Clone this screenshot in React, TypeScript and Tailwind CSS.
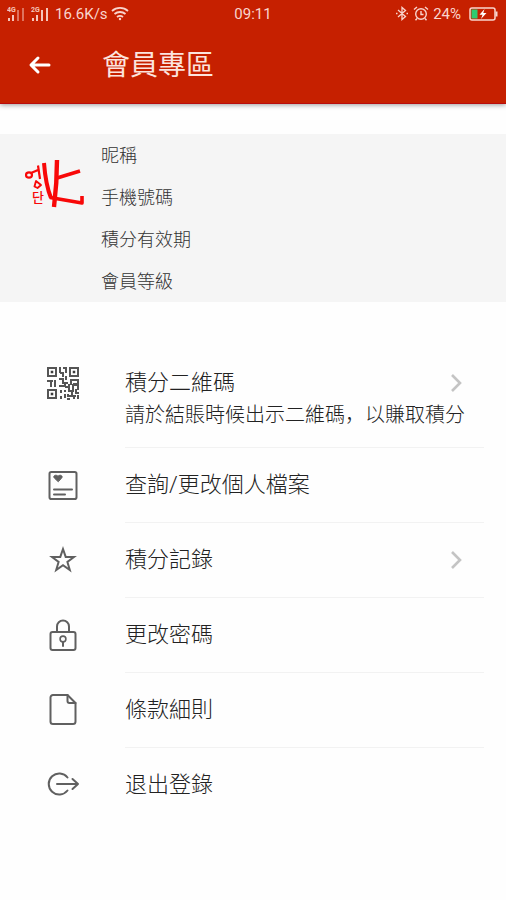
import type { ReactNode } from 'react';
import { clsx } from 'clsx';

interface MenuItem {
  id: string;
  label: string;
  description?: string;
  icon: ReactNode;
  hasArrow?: boolean;
}

const QR_FINDERS = [
  [0, 0],
  [22, 0],
  [0, 22],
];

const QR_BITS = [
  'M13 0v6M13 6h3v4M19 0v6M16 1h3M19 9v4',
  'M0 14h6M4 14v6M8 13v7M12 12h4v4h5M23 13h9M31 13v4h-5M24 14v4',
  'M12 19h6v-3M18 20h4v4h4v-6h5v5M22 21v-4M29 22v4h3M25 25v4h4',
  'M14 23v3M17 24h2M14 29v3M18 27v4M21 27v2h3M20 32h3M27 28v4M31 28v4',
];

function QrIcon() {
  return (
    <svg
      viewBox="-1 -1 34 34"
      fill="none"
      strokeWidth="2"
      className="h-[34px] w-[34px] stroke-[#555]"
    >
      {QR_FINDERS.map(([x, y]) => (
        <g key={`${x}-${y}`}>
          <rect x={x + 1} y={y + 1} width="8" height="8" />
          <rect
            x={x + 4}
            y={y + 4}
            width="2"
            height="2"
            fill="#222"
            strokeWidth="0.6"
          />
        </g>
      ))}
      {QR_BITS.map((d) => (
        <path key={d} d={d} />
      ))}
    </svg>
  );
}

function LineIcon({ children }: { children: ReactNode }) {
  return (
    <svg
      viewBox="0 0 34 34"
      fill="none"
      strokeWidth="2"
      strokeLinecap="round"
      strokeLinejoin="round"
      className="h-[34px] w-[34px] stroke-[#606060]"
    >
      {children}
    </svg>
  );
}

const menuItems: MenuItem[] = [
  {
    id: 'qr',
    label: '積分二維碼',
    description: '請於結賬時候出示二維碼，以賺取積分',
    icon: <QrIcon />,
    hasArrow: true,
  },
  {
    id: 'profile',
    label: '查詢/更改個人檔案',
    icon: (
      <LineIcon>
        <rect x="3.5" y="3" width="27" height="27" rx="1.8" />
        <path
          d="M12 12.5 8.3 9C6.5 7 9.700 5 12 7.200c2.300-2.200 5.500-.2 3.700 1.800Z"
          fill="#606060"
          strokeWidth="1"
        />
        <path d="M8 20.500h18M8 25.500h11" />
      </LineIcon>
    ),
  },
  {
    id: 'history',
    label: '積分記錄',
    icon: (
      <LineIcon>
        <path
          d="m17 5 2.700 7.900 8.300.1-6.600 5 2.400 8L17 21.200 10.200 26l2.400-8L6 13l8.300-.1Z"
          strokeLinejoin="miter"
        />
      </LineIcon>
    ),
    hasArrow: true,
  },
  {
    id: 'password',
    label: '更改密碼',
    icon: (
      <LineIcon>
        <rect x="4.500" y="13" width="25" height="18" rx="2" />
        <path d="M11 12.500V7.500a6 6 0 0 1 12 0v5" />
        <circle cx="17" cy="20" r="2.900" strokeWidth="1.600" />
        <path d="M17 23v4" />
      </LineIcon>
    ),
  },
  {
    id: 'terms',
    label: '條款細則',
    icon: (
      <LineIcon>
        <path d="M21.500 1H7a2.500 2.500 0 0 0-2.500 2.500v24A2.500 2.500 0 0 0 7 30h20a2.500 2.500 0 0 0 2.500-2.500V9Z" />
        <path d="M21.500 1v6a2 2 0 0 0 2 2h6" />
      </LineIcon>
    ),
  },
  {
    id: 'logout',
    label: '退出登錄',
    icon: (
      <LineIcon>
        <path d="M21.500 8.500A10.500 10.500 0 1 0 21.500 21.500" />
        <path d="M11 15h21M26.500 10l5.500 5-5.500 5" />
      </LineIcon>
    ),
  },
];

const profileFields = ['昵稱', '手機號碼', '積分有效期', '會員等級'];

function SignalBars({ label, dim }: { label: string; dim?: boolean }) {
  return (
    <svg viewBox="0 0 20 16" className="h-4 w-5 fill-[#f6c5bb]">
      <text x="0" y="6" fontSize="7" fontWeight="700">
        {label}
      </text>
      <rect x="1" y="12" width="2" height="3" />
      <rect x="5" y="9" width="2" height="6" />
      <rect x="10" y="4" width="2" height="11" opacity={dim ? 0.5 : 1} />
      <rect x="15" y="2" width="2" height="13" opacity={dim ? 0.5 : 1} />
    </svg>
  );
}

function StatusBar() {
  return (
    <div className="grid h-7 grid-cols-[1fr_auto_1fr] items-center px-[7px] text-[15px] text-[#f9d5cd]">
      <div className="flex items-center">
        <SignalBars label="4G" dim />
        <div className="w-1" />
        <SignalBars label="2G" />
        <span className="ml-1">16.6K/s</span>
        <svg
          viewBox="0 0 18 16"
          fill="none"
          stroke="currentColor"
          strokeWidth="1.800"
          className="ml-[3px] h-4 w-[18px]"
        >
          <path d="M1 5a12 12 0 0 1 16 0M3.500 8a8.500 8.500 0 0 1 11 0M6 11a5 5 0 0 1 6 0" />
          <circle cx="9" cy="13" r="1.200" fill="currentColor" stroke="none" />
        </svg>
      </div>
      <span>09:11</span>
      <div className="flex items-center justify-end gap-1">
        <svg
          viewBox="0 0 14 16"
          fill="none"
          stroke="currentColor"
          strokeWidth="1.300"
          className="h-4 w-[14px]"
        >
          <path d="m3 4 7.500 6.500L7 13.500v-12l3.500 3L3 11M1 7.500h1.500M11.500 7.500H13" />
        </svg>
        <svg
          viewBox="0 0 16 16"
          fill="none"
          stroke="currentColor"
          strokeWidth="1.400"
          className="h-4 w-4"
        >
          <circle cx="8" cy="8" r="5.300" />
          <path d="M8 5v3.500h2.500M1 3.500 4 1M15 3.500 12 1M4 12.500l-1.500 1.800M12 12.500l1.500 1.800" />
        </svg>
        <span className="mr-1">24%</span>
        <svg viewBox="0 0 30 14" className="h-[14px] w-[30px]">
          <rect
            x="1"
            y="1"
            width="25"
            height="12"
            rx="2"
            fill="none"
            stroke="currentColor"
            strokeWidth="1.500"
          />
          <rect x="2.500" y="2.500" width="6" height="9" fill="#2ecc71" />
          <path d="M27.500 4.500v5" stroke="currentColor" strokeWidth="2" />
          <path d="m15.500 2-5 5.800h3l-1.500 4.200 5.500-6h-3.200Z" fill="#fff" />
        </svg>
      </div>
    </div>
  );
}

function Logo() {
  return (
    <svg viewBox="0 0 60 50" className="h-[50px] w-[60px]" aria-hidden="true">
      <g fill="none" stroke="#f80808" strokeLinejoin="round">
        <path d="M19 3c1 13 2.500 24 7 35" strokeWidth="4" />
        <path d="M32 0c0 16-1 31-3 47" strokeWidth="4.400" />
        <path d="M32 18 55 11" strokeWidth="3.600" />
        <path d="M25 37.500 57 43v-7" strokeWidth="3.600" />
        {/* brush marks left of the K */}
        <ellipse cx="4" cy="15" rx="3" ry="2.600" strokeWidth="2.200" />
        <path d="m6 13 7-3M13 5.500 15 19" strokeWidth="2.200" />
        <path d="m11 21-1.500 5.500 3 1.500L16 25Z" strokeWidth="1.900" />
      </g>
      <text
        x="7"
        y="42"
        fontSize="13"
        fontWeight="500"
        fill="#f80808"
        fontFamily="Noto Sans CJK KR, sans-serif"
      >
        단
      </text>
    </svg>
  );
}

function MenuRow({ item, isLast }: { item: MenuItem; isLast: boolean }) {
  return (
    <li>
      <button
        type="button"
        className={clsx(
          'flex w-full pr-[22px] text-left',
          item.description ? 'h-[92px]' : 'h-[75px]'
        )}
      >
        <span
          className={clsx(
            'flex w-[125px] shrink-0 justify-center',
            item.description ? 'pt-[10px]' : 'self-center'
          )}
        >
          {item.icon}
        </span>
        <span
          className={clsx(
            'flex h-full min-w-0 flex-1 flex-col border-b',
            isLast ? 'border-transparent' : 'border-[#f2f2f2]',
            item.description ? 'pt-[11px]' : 'justify-center'
          )}
        >
          <span className="flex items-center justify-between pr-[22px]">
            <span className="text-[22px] leading-8">{item.label}</span>
            {item.hasArrow && (
              <svg
                viewBox="0 0 12 20"
                fill="none"
                strokeWidth="2.600"
                className="h-5 w-3 stroke-[#c4c4c4]"
              >
                <path d="m2 2 8 8-8 8" />
              </svg>
            )}
          </span>
          {item.description && (
            <span className="text-[20px] leading-8 whitespace-nowrap">
              {item.description}
            </span>
          )}
        </span>
      </button>
    </li>
  );
}

export default function App() {
  return (
    <div
      lang="zh-CN"
      className="min-h-screen bg-[#fefefe] font-['Roboto','Noto_Sans_CJK_SC',sans-serif] font-light text-[#222]"
    >
      <header className="border-b border-[#b80c0c] bg-[#c62000] font-normal shadow-[0_1px_5px_rgba(0,0,0,0.4)]">
        <StatusBar />
        <div className="flex h-[75px] items-center pl-7 text-white">
          <button type="button" aria-label="返回">
            <svg
              viewBox="0 0 24 24"
              fill="none"
              stroke="currentColor"
              strokeWidth="3"
              strokeLinecap="round"
              strokeLinejoin="round"
              className="h-6 w-6"
            >
              <path d="M21 11H4M10 4l-7 7 7 7" />
            </svg>
          </button>
          <h1 className="ml-[50px] text-[28px] leading-10 text-[#fce4de]">
            會員專區
          </h1>
        </div>
      </header>

      <section className="mt-[30px] flex bg-[#f5f5f5]">
        <div className="w-[101px] shrink-0 pt-[26px] pl-[25px]">
          <Logo />
        </div>
        <ul className="text-[18px] text-[#333]">
          {profileFields.map((field) => (
            <li key={field} className="flex h-[42px] items-center">
              {field}
            </li>
          ))}
        </ul>
      </section>

      <ul className="mt-[54px]">
        {menuItems.map((item, index) => (
          <MenuRow
            key={item.id}
            item={item}
            isLast={index === menuItems.length - 1}
          />
        ))}
      </ul>
    </div>
  );
}
